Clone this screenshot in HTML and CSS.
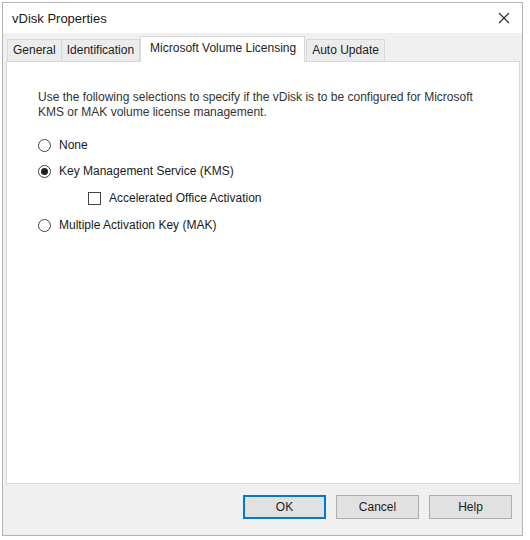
FILE: index.html
```html
<!DOCTYPE html>
<html lang="en">
<head>
  <meta charset="UTF-8" />
  <title>vDisk Properties</title>
  <link rel="stylesheet" href="styles.css">
</head>
<body>

  <div class="window">
    <div class="titlebar">
      <span class="caption">vDisk Properties</span>
      <svg class="close" width="12" height="12" viewBox="0 0 12 12">
        <path d="M1 1 L11 11 M11 1 L1 11" stroke="#333" stroke-width="1.2" fill="none"/>
      </svg>
    </div>

    <div class="tabs">
      <div class="tab">General</div>
      <div class="tab">Identification</div>
      <div class="tab active">Microsoft Volume Licensing</div>
      <div class="tab">Auto Update</div>
    </div>

    <div class="panel">
      <p class="intro">Use the following selections to specify if the vDisk is to be configured for Microsoft KMS or MAK volume license management.</p>

      <div class="option">
        <span class="radio"></span>
        <span>None</span>
      </div>
      <div class="option">
        <span class="radio checked"></span>
        <span>Key Management Service (KMS)</span>
      </div>
      <div class="option sub">
        <span class="check"></span>
        <span>Accelerated Office Activation</span>
      </div>
      <div class="option">
        <span class="radio"></span>
        <span>Multiple Activation Key (MAK)</span>
      </div>
    </div>

    <div class="footer">
      <button class="default">OK</button>
      <button>Cancel</button>
      <button>Help</button>
    </div>
  </div>

</body>
</html>
```

FILE: styles.css
```css
:root {
  --face: #f0f0f0;
  --border: #adadad;
  --text: #1a1a1a;
  --accent: #0078d7;
}

* {
  box-sizing: border-box;
}

body {
  margin: 0;
  background: #fff;
  font-family: 'Liberation Sans', Arial, sans-serif;
  font-size: 12px;
  color: var(--text);
}

.window {
  margin: 2px 0 0 2px;
  width: 521px;
  height: 534px;
  border: 1px solid #b4b4b4;
  background: var(--face);
  display: flex;
  flex-direction: column;
}

.titlebar {
  height: 30px;
  background: #fff;
  display: flex;
  align-items: center;
  justify-content: space-between;
  padding: 0 12px 0 9px;
}

.caption {
  font-size: 13px;
}

.tabs {
  display: flex;
  align-items: flex-end;
  height: 28px;
  padding: 0 0 0 4px;
}

.tab {
  height: 22px;
  line-height: 20px;
  padding: 0 5px;
  margin-right: -1px;
  border: 1px solid #d9d9d9;
  border-bottom: none;
  background: #ececec;
  color: #222;
}

.tab.active {
  height: 26px;
  line-height: 22px;
  padding: 0 8px 0 9px;
  margin: 0 1px 0 1px;
  background: #fff;
  position: relative;
  top: 1px;
}

.panel {
  flex: 1;
  margin: 0 2px 0 3px;
  background: #fff;
  border: 1px solid #d9d9d9;
  padding: 28px 0 0 31px;
}

.intro {
  margin: 0 0 12px;
  width: 450px;
  line-height: 15px;
  color: #333;
}

.option {
  display: flex;
  align-items: center;
  gap: 8px;
  height: 26px;
}

.option.sub {
  padding-left: 50px;
  height: 28px;
}

.radio {
  width: 13px;
  height: 13px;
  border: 1px solid #444;
  border-radius: 50%;
  background: #fff;
  display: flex;
  align-items: center;
  justify-content: center;
}

.radio.checked::after {
  content: '';
  width: 7px;
  height: 7px;
  border-radius: 50%;
  background: #222;
}

.check {
  width: 13px;
  height: 13px;
  border: 1px solid #444;
  background: #fff;
}

.footer {
  height: 51px;
  display: flex;
  justify-content: flex-end;
  align-items: center;
  gap: 10px;
  padding: 0 10px 6px 0;
}

.footer button {
  width: 83px;
  height: 24px;
  font-family: inherit;
  font-size: 12px;
  color: #222;
  background: #e1e1e1;
  border: 1px solid var(--border);
}

.footer button.default {
  border: 2px solid var(--accent);
}
```
